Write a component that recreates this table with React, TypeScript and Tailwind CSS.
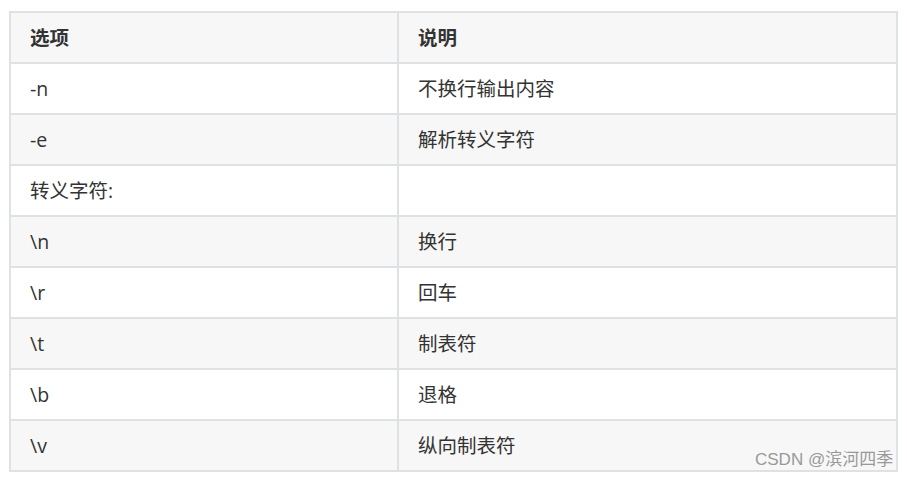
import React from "react";

const rows: [string, string][] = [
  ["-n", "不换行输出内容"],
  ["-e", "解析转义字符"],
  ["转义字符:", ""],
  ["\\n", "换行"],
  ["\\r", "回车"],
  ["\\t", "制表符"],
  ["\\b", "退格"],
  ["\\v", "纵向制表符"],
];

export default function App() {
  const font = {
    fontFamily: '"Open Sans", "Noto Sans", "Noto Sans CJK SC", sans-serif',
  };
  return (
    <div className="w-[907px] h-[480px] bg-white relative overflow-hidden" style={font}>
      <div className="pt-[11px] pl-[9px]">
        <div className="w-[889px] bg-[#dfe2e5] p-[2px] grid grid-cols-[386px_497px] gap-[2px] auto-rows-[49px] text-[19.5px] text-[#333333]">
          <div className="bg-[#f7f7f7] flex items-center pl-[19px] font-bold">选项</div>
          <div className="bg-[#f7f7f7] flex items-center pl-[19px] font-bold">说明</div>
          {rows.map(([a, b], i) => {
            const bg = i % 2 === 1 ? "bg-[#f7f7f7]" : "bg-white";
            return (
              <React.Fragment key={i}>
                <div className={`${bg} flex items-center pl-[19px]`}>{a}</div>
                <div className={`${bg} flex items-center pl-[19px]`}>{b}</div>
              </React.Fragment>
            );
          })}
        </div>
      </div>
      <div
        className="absolute left-[755px] top-[449px] text-[17px] leading-[22px] text-[#999999] whitespace-nowrap"
        style={{ fontFamily: '"Liberation Sans", "Noto Sans CJK SC", sans-serif' }}
      >
        CSDN @滨河四季
      </div>
    </div>
  );
}
